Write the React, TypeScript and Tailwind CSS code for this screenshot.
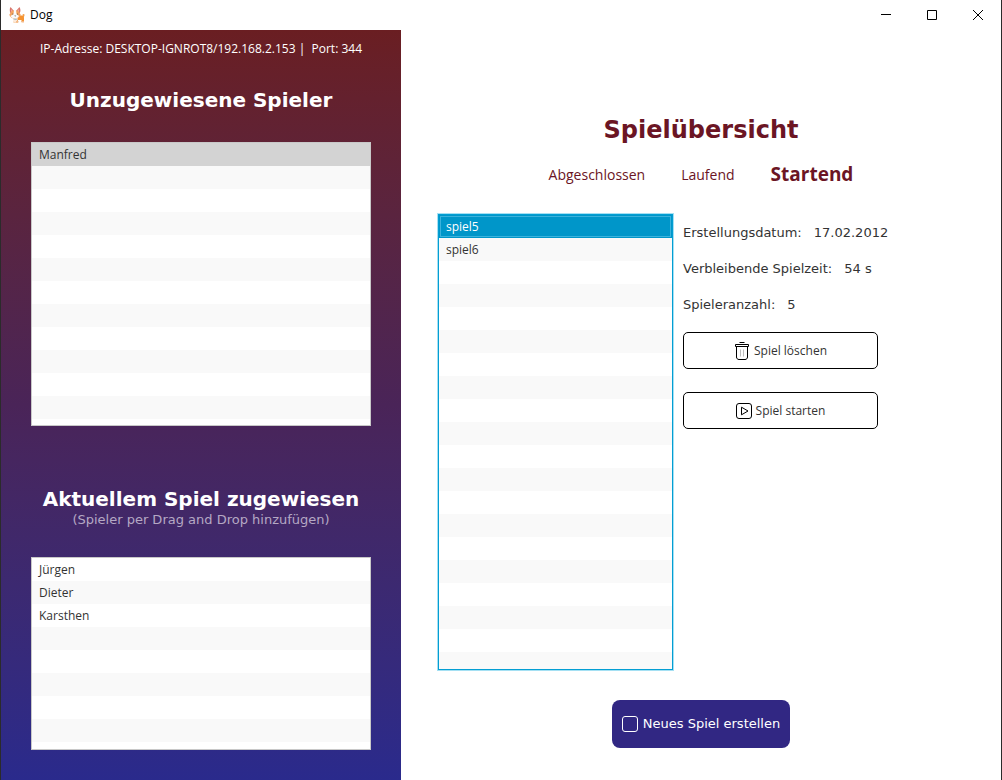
import { useState } from "react";

function CorgiIcon() {
  return (
    <svg viewBox="0 0 32 32" className="size-4" aria-hidden="true">
      <path d="M27 15c2-2 4-1 4 1s-1 4-3 5z" fill="#f3a04e" />
      <path d="M12 17h14c3 0 4 2 4 5v8h-5v-4h-7v5H9z" fill="#f59331" />
      <path d="M8 19l9 1c1 5 0 8-3 11H9z" fill="#fbe9da" />
      <path d="M25 28h5v3h-5zM14 28h5v3h-5z" fill="#f2b98a" />
      <path d="M3 0l7 8-7 5C1 8 1 3 3 0zM21 0l-7 8 7 5c3-5 2-9 0-13z" fill="#d9776c" />
      <path d="M4 4l4 5-4 3zM20 4l-4 5 4 3z" fill="#f0a9a4" />
      <path d="M6 7h12l5 8c0 5-5 8-11 8S1 20 1 15z" fill="#f3a25c" />
      <path d="M10 6h4l1 8 5 4c-2 4-5 5-8 5s-7-1-9-5l6-4z" fill="#fafafa" />
      <circle cx="7.500" cy="14" r="1.200" fill="#6b5a50" />
      <circle cx="17" cy="14" r="1.200" fill="#6b5a50" />
      <path d="M10.500 17h4l-2 2.500z" fill="#777" />
      <path d="M9 23l8 1-3 2-5-1z" fill="#9fb9c6" />
    </svg>
  );
}

function TrashIcon() {
  return (
    <svg viewBox="0 0 16 20" width="16" height="20" fill="none" stroke="#000" aria-hidden="true">
      <path d="M5.500 1.500h5M1.500 3.500h13v2h-13zM2.500 5.500v10.500c0 1.500 1 2.500 2.500 2.500h6c1.500 0 2.500-1 2.500-2.500V5.500" />
      <path d="M6.500 8.500v7M9.500 8.500v7" stroke="#bdbdbd" />
    </svg>
  );
}

function PlayIcon() {
  return (
    <svg viewBox="0 0 16 16" width="16" height="16" fill="none" stroke="#000" aria-hidden="true">
      <rect x="0.500" y="0.500" width="15" height="15" rx="2.500" />
      <path d="M5.500 4.200v7.600L12 8z" />
    </svg>
  );
}

type ListProps = {
  label: string;
  items: string[];
  rows: number;
  selected?: string;
  variant?: "plain" | "focused";
  className: string;
  onSelect?: (item: string) => void;
};

function ListView({ label, items, rows, selected, variant = "plain", className, onSelect }: ListProps) {
  const focused = variant === "focused";
  return (
    <ul
      aria-label={label}
      className={`overflow-hidden bg-white text-xs text-[#333333] ${
        focused ? "border border-[#039ed3] ring-1 ring-[#a5e0f3]" : "border border-[#c8c8c8]"
      } ${className}`}
    >
      {Array.from({ length: rows }, (_, i) => {
        const item = items[i];
        const active = item !== undefined && item === selected;
        const tone = active
          ? focused
            ? "bg-[#0096c9] text-white outline outline-1 -outline-offset-2 outline-[#3bb2dc]"
            : "bg-[#d3d3d3]"
          : i % 2
            ? "bg-[#f9f9f9]"
            : "bg-white";
        return (
          <li key={i} className={`h-[23px] ${tone}`}>
            {item !== undefined && (
              <button type="button" className="flex h-full w-full items-center px-[7px]" onClick={() => onSelect?.(item)}>
                {item}
              </button>
            )}
          </li>
        );
      })}
    </ul>
  );
}

const details = [
  ["Erstellungsdatum:", "17.02.2012"],
  ["Verbleibende Spielzeit:", "54 s"],
  ["Spieleranzahl:", "5"],
];

const tabs = ["Abgeschlossen", "Laufend", "Startend"];

export default function App() {
  const [tab, setTab] = useState("Startend");
  const [game, setGame] = useState("spiel5");
  const [player, setPlayer] = useState("Manfred");

  return (
    <div className="flex min-h-screen flex-col border-x border-[#2b2b2b] bg-white font-['Open_Sans',sans-serif]">
      <header className="flex h-[30px] items-center pl-2">
        <CorgiIcon />
        <h1 className="ml-[5px] text-xs text-black">Dog</h1>
        <div className="ml-auto flex h-full">
          <button type="button" aria-label="Minimieren" className="flex w-[46px] items-center justify-center">
            <svg width="10" height="10" stroke="#000" aria-hidden="true">
              <path d="M0 4.500h10" />
            </svg>
          </button>
          <button type="button" aria-label="Maximieren" className="flex w-[46px] items-center justify-center">
            <svg width="10" height="10" fill="none" stroke="#000" aria-hidden="true">
              <path d="M.5.500h9v9h-9z" />
            </svg>
          </button>
          <button type="button" aria-label="Schließen" className="flex w-[46px] items-center justify-center">
            <svg width="10" height="10" stroke="#000" aria-hidden="true">
              <path d="M0 0l10 10M10 0L0 10" />
            </svg>
          </button>
        </div>
      </header>

      <div className="flex flex-1">
        <aside className="w-2/5 bg-linear-to-b from-[#6a1e22] via-[#4a2458] to-[#2a2a8c] px-[30px] pb-[30px]">
          <p className="pt-[11px] text-center text-xs leading-4 whitespace-pre text-white">
            IP-Adresse: DESKTOP-IGNROT8/192.168.2.153 |{"  "}Port: 344
          </p>
          <h2 className="mt-[27px] text-center font-['DejaVu_Sans',sans-serif] text-xl leading-8 font-bold whitespace-nowrap text-white">
            Unzugewiesene Spieler
          </h2>
          <ListView
            label="Unzugewiesene Spieler"
            items={["Manfred"]}
            rows={13}
            selected={player}
            onSelect={setPlayer}
            className="mt-[26px] h-[284px]"
          />
          <h2 className="mt-[61px] text-center font-['DejaVu_Sans',sans-serif] text-xl leading-6 font-bold whitespace-nowrap text-white">
            Aktuellem Spiel zugewiesen
          </h2>
          <p className="text-center font-['DejaVu_Sans',sans-serif] text-[13px] leading-[18px] text-[#b5a8c4]">
            (Spieler per Drag and Drop hinzufügen)
          </p>
          <ListView
            label="Aktuellem Spiel zugewiesen"
            items={["Jürgen", "Dieter", "Karsthen"]}
            rows={9}
            className="mt-7 h-[193px]"
          />
        </aside>

        <main className="flex w-3/5 flex-col items-center pt-[82px]">
          <h2 className="font-['DejaVu_Sans',sans-serif] text-2xl leading-9 font-bold text-[#6b1524]">Spielübersicht</h2>
          <nav className="mt-2.5 flex h-8 items-center gap-9 text-[#6b1524]">
            {tabs.map((name) => (
              <button
                key={name}
                type="button"
                aria-pressed={tab === name}
                onClick={() => setTab(name)}
                className={tab === name ? "text-[19px] font-bold" : "text-[14px]"}
              >
                {name}
              </button>
            ))}
          </nav>
          <section className="mt-6 flex w-full gap-2.5 pl-[37px]">
            <ListView
              label="Spiele"
              items={["spiel5", "spiel6"]}
              rows={20}
              selected={game}
              variant="focused"
              onSelect={setGame}
              className="h-[456px] w-[235px]"
            />
            <div className="w-[220px] pt-px">
              <dl className="font-['DejaVu_Sans',sans-serif] text-[13px] whitespace-nowrap text-[#333333]">
                {details.map(([name, value]) => (
                  <div key={name} className="flex h-9 items-center gap-3">
                    <dt>{name}</dt>
                    <dd>{value}</dd>
                  </div>
                ))}
              </dl>
              <div className="mt-[9px] flex w-[195px] flex-col gap-[23px] text-xs text-[#333333]">
                <button type="button" className="flex h-[37px] items-center justify-center gap-1 rounded-[5px] border border-black">
                  <TrashIcon />
                  Spiel löschen
                </button>
                <button type="button" className="flex h-[37px] items-center justify-center gap-1 rounded-[5px] border border-black">
                  <PlayIcon />
                  Spiel starten
                </button>
              </div>
            </div>
          </section>
          <button
            type="button"
            className="mt-[30px] flex h-12 items-center gap-[5px] rounded-lg bg-[#312783] px-2.5 font-['DejaVu_Sans',sans-serif] text-[13px] text-white"
          >
            <span className="size-4 rounded-[3px] border border-white" />
            Neues Spiel erstellen
          </button>
        </main>
      </div>
    </div>
  );
}
